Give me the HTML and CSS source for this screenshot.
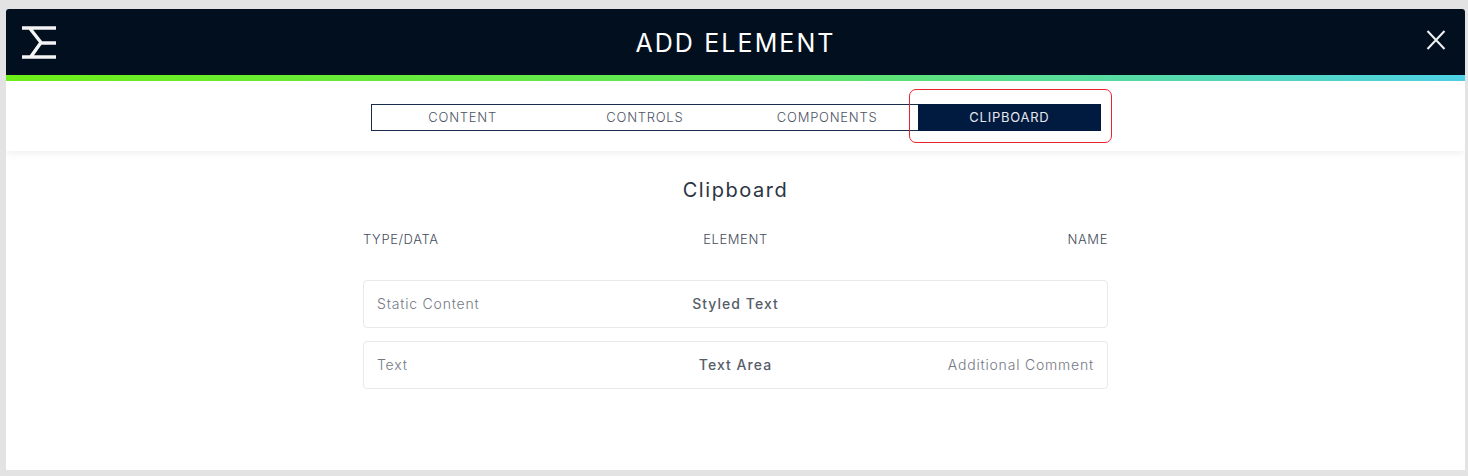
FILE: index.html
```html
<!DOCTYPE html>
<html>
<head>
<title>Add Element</title>
<meta charset="utf-8">
<link rel="stylesheet" href="styles.css">
</head>
<body>
<div class="window">
	<div class="header">
		<svg class="logo" width="34" height="34" viewBox="0 0 34 34">
			<path d="M0 3H34M0 32H34M18 18H34M8 3.5L19 17.5L9 31.5" fill="none" stroke="#f4f4f4" stroke-width="3.4"/>
		</svg>
		<div class="title">ADD ELEMENT</div>
		<svg class="close" width="20" height="20" viewBox="0 0 20 20">
			<path d="M1.5 1L18.5 19M18.5 1L1.5 19" fill="none" stroke="#f0f0f0" stroke-width="2"/>
		</svg>
	</div>
	<div class="accent"></div>
	<div class="tabbar">
		<div class="tabs">
			<div class="tab">CONTENT</div>
			<div class="tab">CONTROLS</div>
			<div class="tab">COMPONENTS</div>
			<div class="tab active">CLIPBOARD</div>
			<div class="highlight"></div>
		</div>
	</div>
	<div class="content">
		<h2 class="heading">Clipboard</h2>
		<div class="list">
			<div class="cols">
				<div>TYPE/DATA</div>
				<div class="mid">ELEMENT</div>
				<div class="end">NAME</div>
			</div>
			<div class="row">
				<div>Static Content</div>
				<div class="mid">Styled Text</div>
				<div class="end"></div>
			</div>
			<div class="row">
				<div>Text</div>
				<div class="mid">Text Area</div>
				<div class="end">Additional Comment</div>
			</div>
		</div>
	</div>
</div>
</body>
</html>
```
FILE: styles.css
```css
html, body {
	margin: 0;
	height: 100%;
}
body {
	background-color: #e3e3e3;
	padding: 9px 3px 6px 6px;
	box-sizing: border-box;
	font-family: "Inter", "Liberation Sans", sans-serif;
	font-weight: 300;
	overflow: hidden;
}
.window {
	height: 100%;
	background-color: white;
	border-radius: 3px 3px 0 0;
	overflow: hidden;
}
.header {
	height: 66px;
	background-color: #020f1f;
	display: flex;
	align-items: center;
	justify-content: space-between;
	padding: 0 19px 0 16px;
	position: relative;
}
.logo {
	margin-top: -1px;
}
.close {
	margin-top: -4px;
}
.title {
	position: absolute;
	left: 0;
	right: 0;
	text-align: center;
	color: white;
	font-size: 25px;
	font-weight: 400;
	letter-spacing: 2.1px;
	margin-top: 1px;
}
.accent {
	height: 6px;
	background: linear-gradient(to right, #6ff01a 0%, #62e95c 50%, #4fd2e6 100%);
}
.tabbar {
	height: 70px;
	display: flex;
	justify-content: center;
	align-items: center;
	box-shadow: 0 2px 8px rgba(0, 0, 0, 0.07);
	position: relative;
}
.tabs {
	width: 730px;
	height: 27px;
	display: flex;
	box-sizing: border-box;
	border: 1px solid #1a2c4e;
	border-right: 0;
	position: relative;
	margin-top: 3px;
}
.tab {
	flex: 1;
	text-align: center;
	font-size: 13px;
	line-height: 25px;
	color: #4c5462;
	letter-spacing: 0.75px;
}
.tab.active {
	background-color: #011a40;
	color: #e6e8ec;
	margin: -1px 0;
	line-height: 27px;
	font-weight: 400;
}
.highlight {
	position: absolute;
	left: 537px;
	top: -16px;
	width: 203px;
	height: 54px;
	box-sizing: border-box;
	border: 1px solid #e8242f;
	border-radius: 7px;
}
.content {
	padding-top: 26px;
}
.heading {
	margin: 0;
	text-align: center;
	font-size: 20px;
	line-height: 26px;
	font-weight: 400;
	letter-spacing: 1.55px;
	color: #2b3442;
}
.list {
	width: 745px;
	margin: 0 auto;
}
.cols, .row {
	display: grid;
	grid-template-columns: 1fr 1fr 1fr;
	align-items: center;
}
.cols {
	margin-top: 27px;
	margin-bottom: 32px;
	font-size: 13px;
	line-height: 18px;
	color: #444c5a;
	letter-spacing: 0.6px;
}
.row {
	height: 48px;
	box-sizing: border-box;
	border: 1px solid #e9e9ec;
	border-radius: 4px;
	padding: 0 13px 2px;
	margin-bottom: 13px;
	font-size: 14px;
	color: #737983;
	letter-spacing: 0.8px;
}
.mid {
	text-align: center;
}
.end {
	text-align: right;
}
.row .mid {
	color: #565d69;
	font-weight: 500;
	letter-spacing: 1.05px;
}
```
